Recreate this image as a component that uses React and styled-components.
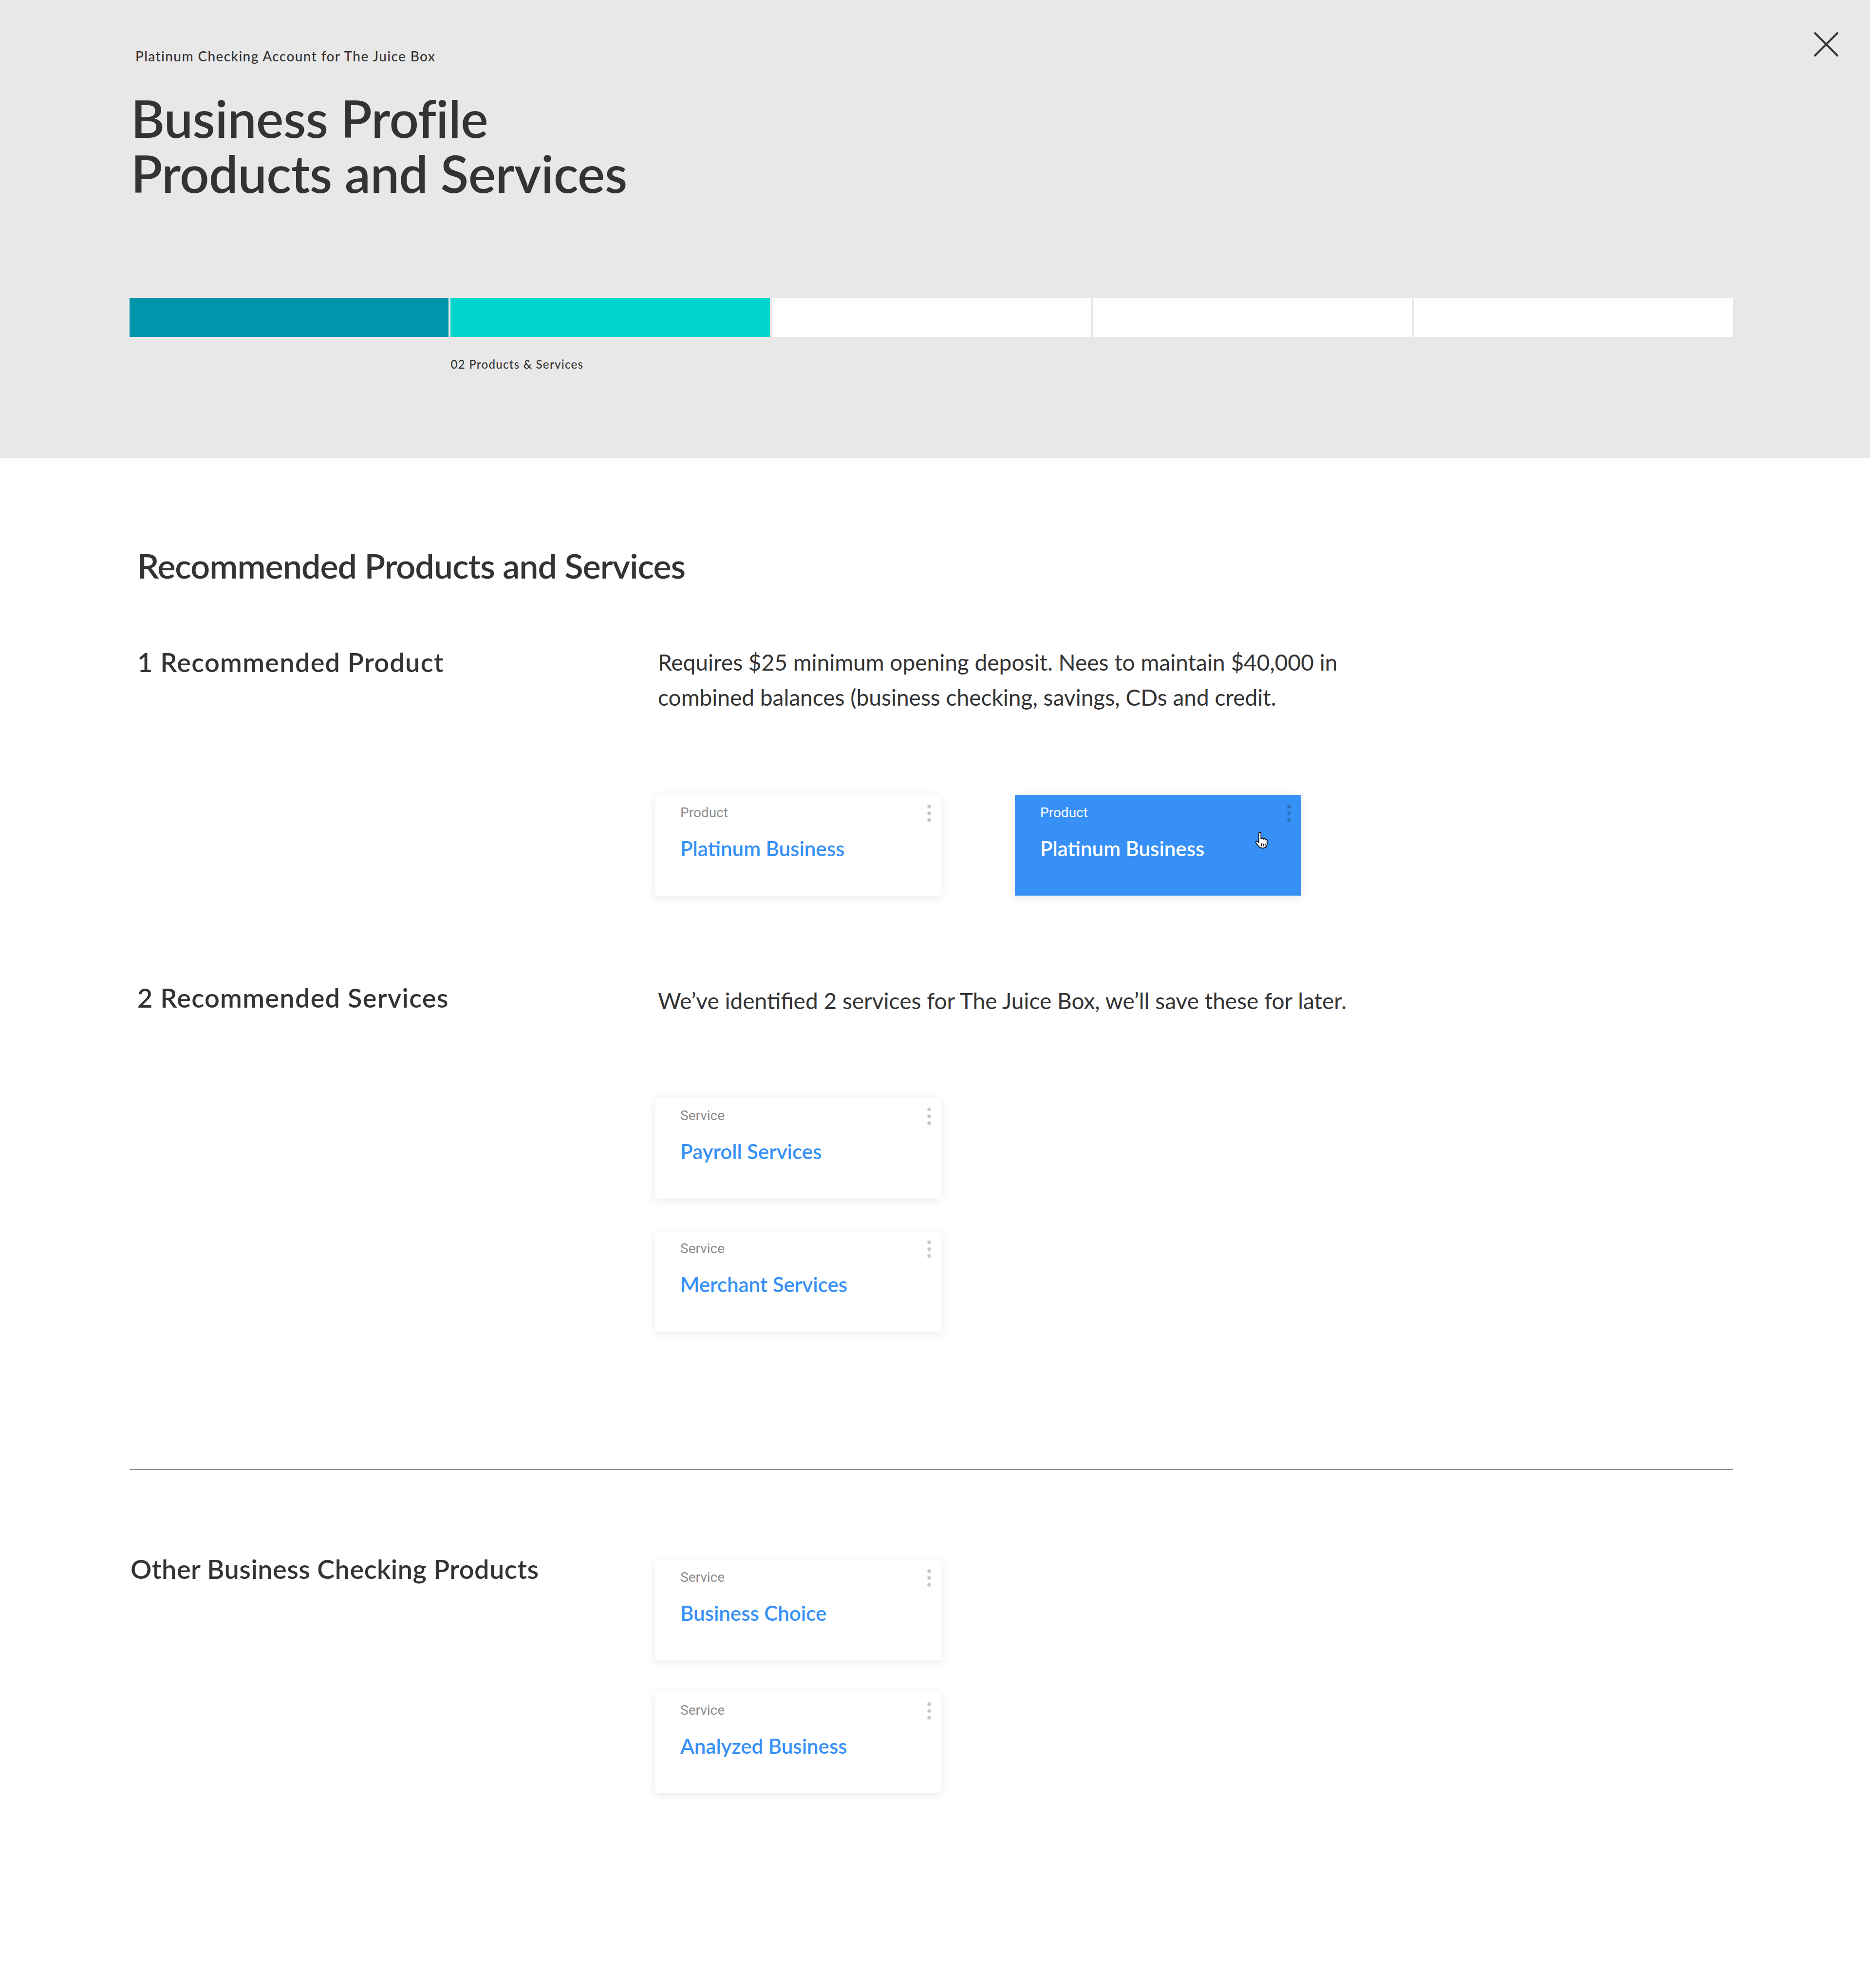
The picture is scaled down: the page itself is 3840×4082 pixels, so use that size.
import React from "react";
import styled, { createGlobalStyle } from "styled-components";

const GlobalStyle = createGlobalStyle`
  body {
    margin: 0;
    background: #fff;
    color: #333;
    font-family: Lato, "Liberation Sans", sans-serif;
  }
`;

const Header = styled.header`
  position: relative;
  box-sizing: border-box;
  height: 940px;
  padding: 99px 281px 0 266px;
  background: #e8e8e8;
`;

const Eyebrow = styled.div`
  padding-left: 12px;
  font-size: 28px;
  line-height: 1.2;
  font-weight: 500;
  letter-spacing: 1.4px;
`;

const PageTitle = styled.h1`
  margin: 53px 0 0;
  padding-left: 3px;
  font-size: 106px;
  line-height: 113px;
  font-weight: 600;
  letter-spacing: -0.5px;
`;

const CloseButton = styled.button`
  position: absolute;
  top: 64px;
  right: 63px;
  width: 54px;
  height: 54px;
  padding: 0;
  border: 0;
  background: none;
  cursor: pointer;
`;

const Steps = styled.div`
  display: grid;
  grid-template-columns: repeat(5, 1fr);
  gap: 4px;
`;

const Progress = styled(Steps)`
  margin-top: 200px;
  height: 80px;
`;

const Segment = styled.div`
  background: ${({ $color }) => $color || "#fff"};
`;

const StepLabel = styled.div`
  grid-column: ${({ $col }) => $col};
  margin-top: 42px;
  font-size: 24px;
  line-height: 1.2;
  font-weight: 500;
  letter-spacing: 1.3px;
`;

const Main = styled.main`
  padding: 179px 281px 396px 266px;
`;

const SectionTitle = styled.h2`
  margin: 0;
  padding-left: 16px;
  font-size: 70px;
  line-height: 1.2;
  font-weight: 600;
  letter-spacing: -1px;
`;

const Row = styled.section`
  display: grid;
  grid-template-columns: 1079px 1fr;
  margin-top: ${({ $top }) => $top}px;
`;

const RowTitle = styled.h3`
  margin: ${({ $offset }) => $offset || 0}px 0 0;
  padding-left: ${({ $indent }) => $indent}px;
  font-size: 54px;
  line-height: 1.2;
  font-weight: 600;
  letter-spacing: ${({ $spacing }) => $spacing ?? 1.3}px;
`;

const Copy = styled.p`
  max-width: 1440px;
  margin: ${({ $offset }) => $offset || 0}px 0 0;
  padding-left: 6px;
  font-size: 46px;
  line-height: 72px;
  font-weight: 400;
`;

const CardRow = styled.div`
  display: flex;
  gap: 152px;
  margin-top: ${({ $top }) => $top}px;
`;

const CardStack = styled.div`
  display: flex;
  flex-direction: column;
  gap: 66px;
  margin-top: ${({ $top }) => $top}px;
`;

const Card = styled.div`
  position: relative;
  box-sizing: border-box;
  width: 587px;
  height: 207px;
  padding: 20px 52px;
  background: ${({ $active }) => ($active ? "#3790f5" : "#fff")};
  box-shadow: 0 4px 18px rgba(40, 50, 60, 0.1);
`;

const CardKind = styled.div`
  font-family: Roboto, "Liberation Sans", sans-serif;
  font-size: 28px;
  line-height: 1.2;
  color: ${({ $active }) => ($active ? "#fff" : "#8c8c8c")};
`;

const CardName = styled.div`
  margin-top: 31px;
  font-size: 42px;
  line-height: 1.2;
  font-weight: 600;
  color: ${({ $active }) => ($active ? "#fff" : "#3790f5")};
`;

const Kebab = styled.svg`
  position: absolute;
  top: 20px;
  right: 20px;
`;

const Pointer = styled.svg`
  position: absolute;
  left: 488px;
  top: 74px;
`;

const Divider = styled.hr`
  margin: 282px 0 0;
  height: 2px;
  border: 0;
  background: #8a8a8a;
`;

function Dots({ active }) {
  const fill = active ? "#2b6fc2" : "#c4c8ca";
  return (
    <Kebab width="8" height="36" viewBox="0 0 8 36">
      <circle cx="4" cy="4" r="3.7" fill={fill} />
      <circle cx="4" cy="18" r="3.7" fill={fill} />
      <circle cx="4" cy="32" r="3.7" fill={fill} />
    </Kebab>
  );
}

function Tile({ kind, name, active, hover }) {
  return (
    <Card $active={active}>
      <CardKind $active={active}>{kind}</CardKind>
      <CardName $active={active}>{name}</CardName>
      <Dots active={active} />
      {hover && (
        <Pointer width="38" height="40" viewBox="0 0 32 32">
          <path
            d="M11 3.5a1.8 1.8 0 0 1 3.6 0V13h.4a1.7 1.7 0 0 1 3.4.4V14a1.7 1.7 0 0 1 3.4.3V15a1.7 1.7 0 0 1 3.4.4V22c0 4-2.6 7-6.6 7h-2.4c-2.6 0-4-1.2-5.6-3.3L6.2 20.4c-.9-1.2-.6-2.6.6-3.1 1-.4 2 0 2.7.9L11 20z"
            fill="#fff"
            stroke="#000"
            strokeWidth="1.4"
            strokeLinejoin="round"
          />
          <path d="M15.4 21v5M18.6 21v5M21.8 21v5" stroke="#000" strokeWidth="1.3" />
        </Pointer>
      )}
    </Card>
  );
}

export default function App() {
  return (
    <>
      <GlobalStyle />
      <Header>
        <Eyebrow>Platinum Checking Account for The Juice Box</Eyebrow>
        <PageTitle>
          Business Profile
          <br />
          Products and Services
        </PageTitle>
        <Progress>
          <Segment $color="#0095ad" />
          <Segment $color="#00d5cd" />
          <Segment />
          <Segment />
          <Segment />
        </Progress>
        <Steps>
          <StepLabel $col={2}>02 Products &amp; Services</StepLabel>
        </Steps>
        <CloseButton aria-label="Close">
          <svg width="54" height="54" viewBox="0 0 54 54">
            <path d="M4 4L50 50M50 4L4 50" stroke="#333" strokeWidth="4" strokeLinecap="round" />
          </svg>
        </CloseButton>
      </Header>

      <Main>
        <SectionTitle>Recommended Products and Services</SectionTitle>

        <Row $top={121}>
          <RowTitle $indent={16} $offset={4}>1 Recommended Product</RowTitle>
          <div>
            <Copy>
              Requires $25 minimum opening deposit. Nees to maintain $40,000 in combined balances
              (business checking, savings, CDs and credit.
            </Copy>
            <CardRow $top={164}>
              <Tile kind="Product" name="Platinum Business" />
              <Tile kind="Product" name="Platinum Business" active hover />
            </CardRow>
          </div>
        </Row>

        <Row $top={174}>
          <RowTitle $indent={16} $offset={4}>2 Recommended Services</RowTitle>
          <div>
            <Copy $offset={6}>We’ve identified 2 services for The Juice Box, we’ll save these for later.</Copy>
            <CardStack $top={163}>
              <Tile kind="Service" name="Payroll Services" />
              <Tile kind="Service" name="Merchant Services" />
            </CardStack>
          </div>
        </Row>

        <Divider />

        <Row $top={172}>
          <RowTitle $indent={2} $spacing={0.5}>Other Business Checking Products</RowTitle>
          <CardStack $top={12}>
            <Tile kind="Service" name="Business Choice" />
            <Tile kind="Service" name="Analyzed Business" />
          </CardStack>
        </Row>
      </Main>
    </>
  );
}
